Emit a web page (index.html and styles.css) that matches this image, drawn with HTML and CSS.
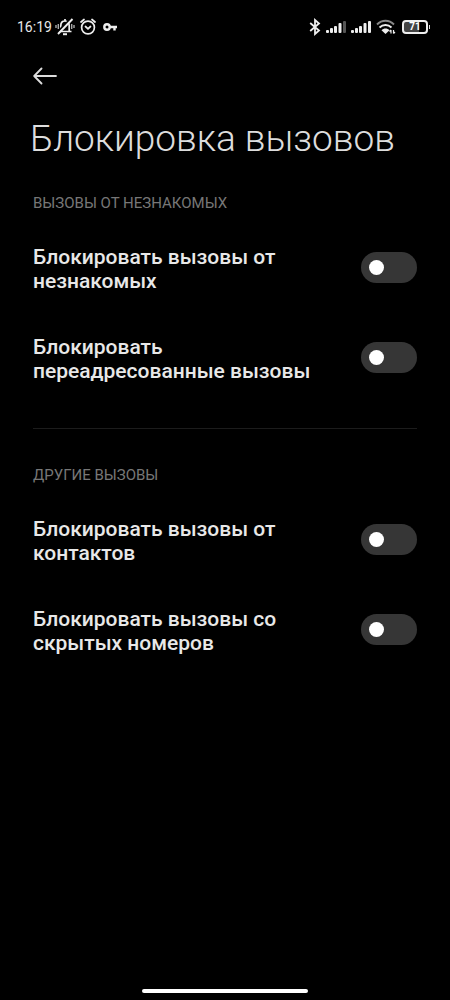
FILE: index.html
```html
<!DOCTYPE html>
<html lang="ru">
<head>
<meta charset="utf-8">
<meta name="viewport" content="width=device-width, initial-scale=1">
<title>Блокировка вызовов</title>
<link rel="stylesheet" href="styles.css">
</head>
<body>
<div class="screen">
  <header class="status-bar">
    <div class="status-left">
      <time class="clock">16:19</time>
      <svg class="icon-bell" width="20" height="18" viewBox="0 0 20 18" fill="none" stroke="#eee" stroke-width="1.7" aria-hidden="true">
        <path d="M5.8 13V7.5C5.800 4.800 7.500 3 10 3s4.200 1.800 4.200 4.500V13M3.500 13.500h13M10 1V3"/>
        <path d="M8 16.200h4" stroke-width="2"/>
        <path d="M16 .5L2 14.500" stroke="#000" stroke-width="2"/>
        <path d="M17.500 1L3 16" stroke-width="1.900"/>
        <path d="M3.300 6v5M16.700 6v5M1 7v3M19 7v3" stroke="#aaa" stroke-width="1.400"/>
      </svg>
      <svg class="icon-alarm" width="16" height="18" viewBox="0 0 16 18" fill="none" stroke="#eee" stroke-width="1.700" stroke-linecap="round" aria-hidden="true">
        <circle cx="8" cy="9.500" r="6.400"/>
        <path d="M1 4L4 1.500M15 4L12 1.500M5.500 8.500L8 10.800L10.500 8.500"/>
      </svg>
      <svg class="icon-key" width="14" height="18" viewBox="0 0 14 18" fill="none" stroke="#eee" stroke-width="2.400" aria-hidden="true">
        <circle cx="4" cy="9" r="2.700"/>
        <path d="M6.500 9H14M11.500 9v3.500"/>
      </svg>
    </div>
    <div class="status-right">
      <svg width="12" height="18" viewBox="0 0 12 18" fill="none" stroke="#eee" stroke-width="1.800" aria-hidden="true">
        <path d="M1.200 5L10 12.500L6 16V2L10 5.500L1.200 13"/>
      </svg>
      <svg width="20" height="18" viewBox="0 0 20 18" fill="#eee" aria-hidden="true">
        <rect x="0" y="12" width="3" height="3" rx="1"/><rect x="4" y="10" width="3" height="5" rx="1"/><rect x="8" y="8" width="3" height="7" rx="1"/><rect x="12.500" y="5" width="3" height="10" rx="1"/><rect x="17" y="3" width="3" height="12" rx="1" fill="#555"/>
      </svg>
      <svg width="20" height="18" viewBox="0 0 20 18" fill="#eee" aria-hidden="true">
        <rect x="0" y="12" width="3" height="3" rx="1"/><rect x="4" y="10" width="3" height="5" rx="1"/><rect x="8" y="8" width="3" height="7" rx="1"/><rect x="12.500" y="5" width="3" height="10" rx="1"/><rect x="17" y="3" width="3" height="12" rx="1"/>
      </svg>
      <svg width="20" height="18" viewBox="0 0 20 18" fill="none" stroke="#eee" stroke-width="1.900" aria-hidden="true">
        <path d="M1 6.500C6 1.500 13 1.500 18 6.500" stroke="#888"/>
        <path d="M3.500 9.500c3.500-3.300 8.500-3.300 12 0"/>
        <path d="M5.500 12.200c2.200-2.200 5.800-2.200 8 0L9.500 16z" fill="#eee" stroke="none"/>
        <path d="M15 15.500v-3.500M13.500 13.500l1.500-1.500M17.500 12v3.500M19 14l-1.500 1.500" stroke-width="1.200"/>
      </svg>
      <span class="battery">71</span>
    </div>
  </header>

  <main class="content">
    <button class="back" type="button" aria-label="Назад">
      <svg width="24" height="18" viewBox="0 0 24 18" fill="none" stroke="#ddd" stroke-width="1.800" stroke-linecap="round" stroke-linejoin="round" aria-hidden="true">
        <path d="M23 9H1.500M8.500 1.500L1.200 9l7.300 7.500"/>
      </svg>
    </button>
    <h1 class="title">Блокировка вызовов</h1>

    <section class="group">
      <h2 class="group-title">ВЫЗОВЫ ОТ НЕЗНАКОМЫХ</h2>
      <label class="row"><span class="row-text">Блокировать вызовы от незнакомых</span><input class="switch" type="checkbox" role="switch"></label>
      <label class="row"><span class="row-text">Блокировать переадресованные вызовы</span><input class="switch" type="checkbox" role="switch"></label>
    </section>

    <section class="group">
      <h2 class="group-title">ДРУГИЕ ВЫЗОВЫ</h2>
      <label class="row"><span class="row-text">Блокировать вызовы от контактов</span><input class="switch" type="checkbox" role="switch"></label>
      <label class="row"><span class="row-text">Блокировать вызовы со скрытых номеров</span><input class="switch" type="checkbox" role="switch"></label>
    </section>
  </main>

  <footer class="nav"><div class="nav-handle"></div></footer>
</div>
</body>
</html>
```
FILE: styles.css
```css
* {
  box-sizing: border-box;
}

body {
  margin: 0;
  background: #000;
  color: #e8e8e8;
  font-family: Roboto, "Noto Sans", sans-serif;
}

.screen {
  display: flex;
  flex-direction: column;
  min-height: 100vh;
}

.status-bar {
  display: flex;
  justify-content: space-between;
  align-items: center;
  height: 54px;
  padding: 0 20px 0 17px;
}

.status-left,
.status-right {
  display: flex;
  align-items: center;
}

.status-right {
  gap: 5px;
}

.clock {
  font-size: 14px;
  line-height: 18px;
}

.icon-bell {
  margin-left: 3px;
}

.icon-alarm {
  margin-left: 5px;
}

.icon-key {
  margin-left: 7px;
}

.battery {
  position: relative;
  width: 26px;
  height: 14px;
  margin: 0 2px 0 1px;
  border: 2px solid #eee;
  border-radius: 4px;
  background: linear-gradient(90deg, #444 70%, #000 70%);
  color: #fff;
  font-size: 10px;
  font-weight: 700;
  line-height: 10px;
  text-align: center;
}

.battery::after {
  content: "";
  position: absolute;
  top: 3px;
  right: -4px;
  width: 1px;
  height: 4px;
  background: #ddd;
}

.content {
  flex: 1;
  padding: 0 33px;
}

.back {
  display: flex;
  align-items: center;
  height: 44px;
  padding: 0;
  border: 0;
  background: none;
  cursor: pointer;
}

.title {
  margin: 19px 0 32px -3px;
  color: #ddd;
  font-size: 37px;
  font-weight: 300;
  line-height: 44px;
}

.group + .group {
  margin-top: 26px;
  padding-top: 36px;
  border-top: 1px solid #1c1c1c;
}

.group-title {
  margin: 0 0 9px;
  color: #777;
  font-size: 15px;
  font-weight: 400;
  line-height: 20px;
}

.row {
  display: flex;
  justify-content: space-between;
  align-items: center;
  gap: 40px;
  min-height: 90px;
  cursor: pointer;
}

.row-text {
  padding-top: 4px;
  font-size: 21px;
  font-weight: 500;
  line-height: 24px;
}

.switch {
  flex: none;
  display: flex;
  align-items: center;
  appearance: none;
  width: 56px;
  height: 31px;
  margin: 0;
  padding: 0 8px;
  border-radius: 16px;
  background: #363636;
  cursor: pointer;
}

.switch::before {
  content: "";
  width: 15px;
  height: 15px;
  border-radius: 50%;
  background: #fff;
}

.switch:checked {
  justify-content: flex-end;
  background: #2f7cf6;
}

.nav {
  display: flex;
  justify-content: center;
  padding-bottom: 7px;
}

.nav-handle {
  width: 37%;
  height: 4px;
  border-radius: 2px;
  background: #fff;
}
```
